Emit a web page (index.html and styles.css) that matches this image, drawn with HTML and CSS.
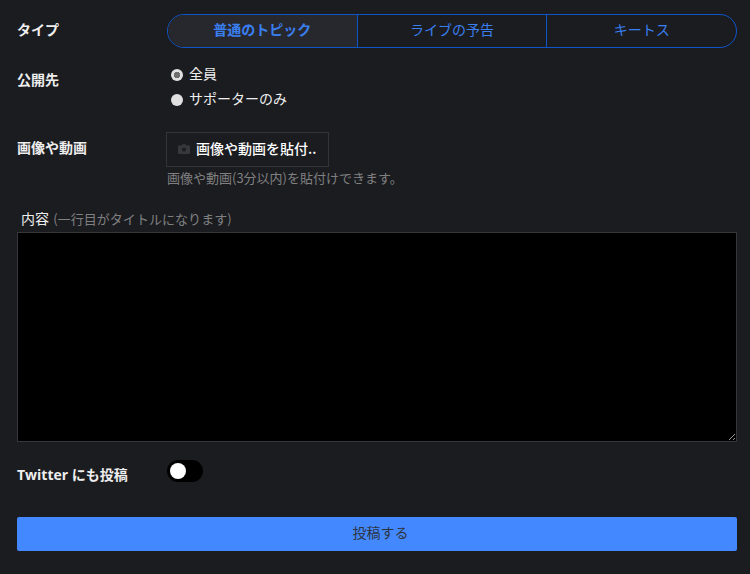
FILE: index.html
```html
<!DOCTYPE html>
<html lang="ja">
<head>
<meta charset="utf-8">
<title>投稿</title>
<link rel="stylesheet" href="styles.css">
</head>
<body>
<form class="form">
  <div class="row row-type">
    <div class="label">タイプ</div>
    <div class="segments">
      <div class="seg seg-active">普通のトピック</div>
      <div class="seg">ライブの予告</div>
      <div class="seg">キートス</div>
    </div>
  </div>
  <div class="row row-audience">
    <div class="label label-audience">公開先</div>
    <div class="radios">
      <label class="radio"><input type="radio" name="a" class="radio-input" checked><span class="radio-text">全員</span></label>
      <label class="radio"><input type="radio" name="a" class="radio-input"><span class="radio-text">サポーターのみ</span></label>
    </div>
  </div>
  <div class="row row-media">
    <div class="label label-media">画像や動画</div>
    <div class="media">
      <div class="upload">
        <svg class="camera" width="12" height="10" viewBox="0 0 12 10"><path fill="#38383a" fill-rule="evenodd" d="M1 1.500h2.600L4.400.3h3.200l.8 1.200H11a1 1 0 0 1 1 1V9a1 1 0 0 1-1 1H1a1 1 0 0 1-1-1V2.500a1 1 0 0 1 1-1zM6 3.400a2 2 0 1 0 0 4 2 2 0 0 0 0-4z"/></svg>
        <span class="upload-text">画像や動画を貼付..</span>
      </div>
      <div class="hint">画像や動画(3分以内)を貼付けできます。</div>
    </div>
  </div>
  <div class="content-label">内容 <span class="muted">(一行目がタイトルになります)</span></div>
  <textarea class="content"></textarea>
  <div class="row row-twitter">
    <div class="label label-twitter">Twitter にも投稿</div>
    <div class="toggle"><span class="knob"></span></div>
  </div>
  <button type="button" class="submit">投稿する</button>
</form>
</body>
</html>
```
FILE: styles.css
```css
* { box-sizing: border-box; }
html, body { margin: 0; height: 100%; }
body {
  background: #1b1c20;
  color: #eee;
  font-family: "Noto Sans CJK JP", "Liberation Sans", sans-serif;
  font-size: 14px;
  overflow: hidden;
}
.form { display: flex; flex-direction: column; padding: 14px 13px 0 17px; }
.row { display: flex; }
.label { width: 150px; flex: none; font-weight: 700; font-size: 14px; line-height: 20px; color: #eee; }
.row-type .label { padding-top: 5px; }
.segments {
  flex: 1;
  display: flex;
  height: 34px;
  border: 1px solid #0f55c8;
  border-radius: 17px;
  overflow: hidden;
}
.seg {
  flex: 1;
  display: flex;
  align-items: center;
  justify-content: center;
  color: #3a7ff0;
  font-size: 14px;
  padding-bottom: 4px;
  border-left: 1px solid #0f55c8;
}
.seg:first-child { border-left: 0; }
.seg-active { background: #27282d; font-weight: 700; }
.row-audience { margin-top: 13px; height: 52px; }
.label-audience { padding-top: 8px; }
.radios { display: flex; flex-direction: column; padding-top: 1px; }
.radio { display: flex; align-items: center; height: 26px; padding-left: 4px; color: #eee; }
.radio-text { padding-bottom: 4px; }
.radio-input {
  appearance: none;
  margin: 0 6px 0 0;
  width: 12px;
  height: 12px;
  border-radius: 50%;
  background: #e0e0e0;
  flex: none;
}
.radio-input:checked { background: radial-gradient(circle, #6e6e6e 0 3px, #e0e0e0 3.5px); }
.row-media { margin-top: 19px; }
.label-media { padding-top: 5px; }
.media { margin-left: -1px; }
.upload {
  width: 163px;
  height: 35px;
  border: 1px solid #333438;
  display: flex;
  align-items: center;
  padding-left: 11px;
  gap: 6px;
}
.camera { margin-top: -2px; flex: none; }
.upload-text { font-weight: 500; white-space: nowrap; color: #fff; padding-bottom: 4px; }
.hint { font-size: 13px; line-height: 18px; margin-top: 2px; margin-left: 1px; color: #808080; }
.content-label { margin-top: 21px; padding-left: 4px; line-height: 20px; height: 24px; }
.muted { color: #808080; font-size: 13px; margin-left: 1px; letter-spacing: .05px; }
.content {
  display: block;
  width: 720px;
  height: 210px;
  background: #000;
  border: 1px solid #36373a;
  color: #eee;
  margin: 0;
  outline: 0;
}
.row-twitter { margin-top: 18px; height: 32px; }
.label-twitter { padding-top: 5px; font-family: "Open Sans", "Noto Sans CJK JP", sans-serif; white-space: nowrap; }
.toggle {
  width: 36px;
  height: 22px;
  background: #000;
  border-radius: 11px;
  padding: 3px;
}
.knob { display: block; width: 16px; height: 16px; border-radius: 50%; background: #fff; }
.submit {
  margin-top: 25px;
  width: 720px;
  height: 34px;
  background: #4488ff;
  border: 0;
  border-radius: 2px;
  color: #2c3440;
  font: inherit;
  font-size: 14px;
  padding: 0 0 4px 7px;
}
```
